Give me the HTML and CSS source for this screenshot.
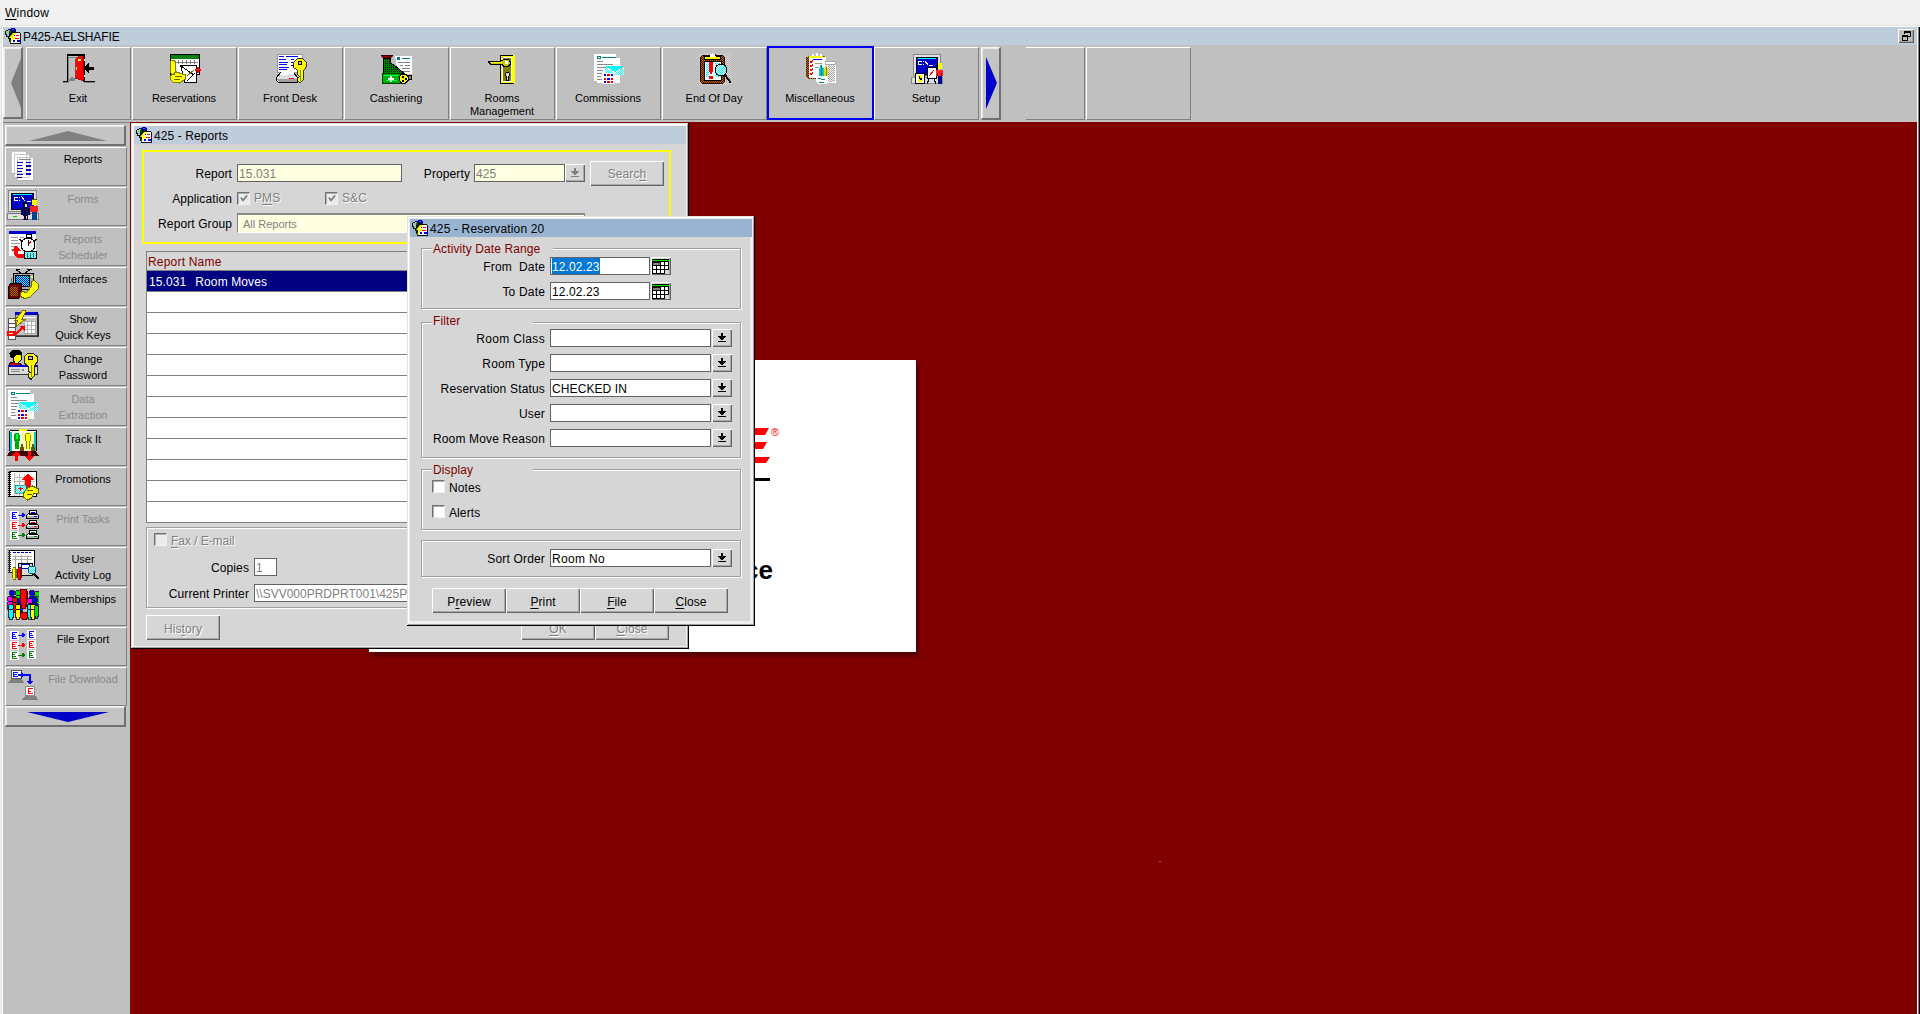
FILE: index.html
```html
<!DOCTYPE html>
<html lang="en">
<head>
<meta charset="utf-8">
<title>P425-AELSHAFIE</title>
<link rel="stylesheet" href="styles.css">
</head>
<body>
<svg class="defs" aria-hidden="true">
  <defs>
    <pattern id="brown" width="2" height="2" patternUnits="userSpaceOnUse"><path fill="#800000" d="M0 0h2v2H0z"/><path fill="#808000" d="M0 0h1v1H0zM1 1h1v1H1z"/></pattern>
    <pattern id="cyan" width="2" height="2" patternUnits="userSpaceOnUse"><path fill="#fff" d="M0 0h2v2H0z"/><path fill="#0ff" d="M0 0h1v1H0zM1 1h1v1H1z"/></pattern>
    <pattern id="blue" width="2" height="2" patternUnits="userSpaceOnUse"><path fill="#0ff" d="M0 0h2v2H0z"/><path fill="#00c" d="M0 0h1v1H0zM1 1h1v1H1z"/></pattern>
    <pattern id="green" width="2" height="2" patternUnits="userSpaceOnUse"><path fill="#008000" d="M0 0h2v2H0z"/><path fill="#000" d="M0 0h1v1H0z"/></pattern>
    <pattern id="gray" width="2" height="2" patternUnits="userSpaceOnUse"><path fill="#fff" d="M0 0h2v2H0z"/><path fill="#a0a0a0" d="M0 0h1v1H0zM1 1h1v1H1z"/></pattern>
    <symbol id="app" viewBox="0 0 16 16"><path fill="#111" d="M1 2h2V1h2v1h6v2h4v1h1v11H5v-2H4v-3H3V9H1V7H0V3h1z"/><path fill="#98c8b0" d="M1 3h2V2h2v2H4v4H2V6H1z"/><path fill="#006000" d="M4 3h2v2H4z"/><path fill="#00a" d="M5 1h1V0h4v1h1v3h-1V3H5z"/><path fill="#36f" d="M7 1h2v1H7z"/><path fill="#fff" d="M8 5h7v10H6V9h2z"/><path fill="#ff0" d="M8 5L4 10h3l-2 5 6-6H8l3-4z"/><path fill="red" d="M11 7h3v1h-3zM10 10h4v1h-4z"/><path fill="#00f" d="M9 7h1v1H9zM8 12h2v2H8zM12 12h3v2h-3z"/></symbol>
    <symbol id="down" viewBox="0 0 8 10"><path fill="currentColor" d="M3 0h2v3h3v1H7v1H6v1H5v1H3V6H2V5H1V4H0V3h3zM0 8h8v1H0z"/></symbol>
    <symbol id="cal" viewBox="0 0 17 15"><path fill="#000" d="M0 0h17v15H0z"/><path fill="#0e0" d="M0 1h17v1H0z"/><path fill="#808080" d="M1 4h7v2H1z"/><path fill="#fff" d="M9 3h3v3H9zM13 3h3v3h-3zM1 7h3v3H1zM5 7h3v3H5zM9 7h3v3H9zM13 7h3v3h-3zM1 11h3v3H1zM5 11h3v3H5zM9 11h3v3H9z"/><path fill="#d6d6d6" d="M13 11h4v4h-4z"/></symbol>
    <symbol id="doc" viewBox="0 0 32 32"><path fill="#fff" d="M1 1h22v4h4v25H4v-2H1z"/><path fill="#888" d="M4 8h6v1H4zM4 11h16v1H4zM4 14h8v1H4zM4 17h6v1H4zM4 20h5v1H4zM4 23h4v1H4zM4 26h5v1H4z"/><path fill="none" stroke="teal" d="M4.500 3.500h3v2h-3z"/><path fill="teal" d="M9 4h14v1H9z"/><path fill="#0ff" d="M12 13h19L22 19z"/><path fill="url(#cyan)" d="M12 14l10 6 9-5v7H12z"/><path fill="#fff" d="M10 20h11v11H10z"/><path fill="#00f" d="M11 21h2v2h-2zM18 21h2v2h-2zM14 25h3v2h-3zM11 28h2v2h-2z"/><path fill="red" d="M14 21h3v2h-3zM11 25h2v2h-2zM18 25h2v2h-2zM14 28h3v2h-3zM18 28h2v2h-2z"/></symbol>
    <symbol id="key" viewBox="0 0 15 27"><path fill="#ff0" stroke="#222" d="M4.500.5h6l3.500 3v6l-3 3.500v10l-3 3.500-3-3v-3l2-1-2-2v-4.500l-4-3v-6z"/><path fill="#c0c0c0" stroke="#000" d="M5.500 3.500h4v3h-4z"/><path stroke="#808000" d="M8.500 12v12"/></symbol>
    <symbol id="sheet" viewBox="0 0 10 9"><path fill="#fff" d="M0 0h10v9H0z"/><path fill="currentColor" d="M2 1h6v1H2zM2 3h4v1H2zM2 5h5v1H2zM2 1h1v6H2zM2 7h6v1H2z"/></symbol>
    <symbol id="arrow" viewBox="0 0 9 7"><path fill="currentColor" d="M0 3h5V0l4 3.500L5 7V5H0z"/></symbol>
    <symbol id="printer" viewBox="0 0 13 10"><path fill="#fff" stroke="#000" d="M3.500.5h7v4h-7zM.5 5.500l2-2h8l2 2v3h-12z"/><path fill="#b0b0b0" d="M1 6h11v2H1z"/><path fill="currentColor" d="M5 2h4v1H5zM8 6h3v1H8z"/></symbol>
    <symbol id="person" viewBox="0 0 6 16"><path fill="#000" d="M1 0h4v1h1v4H5v1h1v8H5v2H1v-2H0V6h1V5H0V1h1z" opacity=".75"/><path fill="currentColor" d="M1 1h4v4H1zM1 6h4v7H4v2H2v-2H1z"/></symbol>
  </defs>
</svg>

<nav class="menubar"><span><u>W</u>indow</span></nav>

<div class="frame">
  <header class="titlebar main-title">
    <svg class="app-icon"><use href="#app"/></svg><span>P425-AELSHAFIE</span>
    <button class="restore" aria-label="Restore"><svg width="9" height="10" viewBox="0 0 9 10"><path fill="#000" d="M2 0h7v6H6V5h2V2H3v1H2zM0 4h6v6H0z"/><path fill="#c0c0c0" d="M1 6h4v3H1z"/></svg></button>
  </header>

  <div class="toolbar">
    <button class="scroll side-left" aria-label="Scroll left"><svg width="10" height="50" viewBox="0 0 10 50"><path fill="#808080" d="M10 0v50L0 25z"/></svg></button>
    <button class="tool"><svg class="ic" viewBox="0 0 32 32"><path fill="#808080" d="M6 4h14v1H6zM5 4h1v25H5zM0 29h6v1H0zM21 29h11v1H21z"/><path fill="#000" d="M0 28h4V1h18v27h10v1H20V3H5v26H0z"/><path fill="#808080" d="M8 24l4 1v3H5z"/><path fill="red" stroke="#800000" stroke-width=".7" d="M12.500 5.500l2-2h6V28l-8-2.500z"/><path fill="#ff0" d="M15 6h3v2h-3zM13 14h1v3h-1z"/><path fill="#fff" d="M21 6h1v2h-1zM21 22h1v2h-1z"/><path d="M20 15l6-5v4h5v3h-5v3z"/></svg><span>Exit</span></button>
    <button class="tool"><svg class="ic" viewBox="0 0 32 32"><path fill="#fff" stroke="#000" d="M1.500 1.500h29v20h-29z"/><path fill="#008000" d="M2 2h28v4H2z"/><path fill="#808080" d="M5 7h1v2H5zM9 7h1v4H9zM13 7h1v4h-1zM17 7h1v4h-1zM21 7h1v4h-1zM25 7h1v4h-1zM6 9h23v1H6z"/><path fill="#fff" stroke="#000" d="M11.500 12h16v17h-12z"/><path stroke="#000" fill="none" d="M12 13l13 9M18 28l8-8"/><path fill="red" d="M28 14h2v2h2v2h-2v2h-2v-2h-2v-2h2z"/><path fill="#ff0" stroke="#808000" d="M2.500 7.500h3l1 2v8l-1 4h-3l-1-3V9zM1.500 23l6-4 9 3v4l-6 4-7-1-2-3z"/><path fill="none" stroke="#666600" d="M6 23h7M5 26h6M18 23l7-6"/></svg><span>Reservations</span></button>
    <button class="tool"><svg class="ic" viewBox="0 0 32 32"><path fill="#fff" stroke="#999" d="M2.500 1.500h25v18h-25z"/><path fill="#00f" d="M4 3h5v1H4zM11 3h12v1H11zM4 6h7v1H4zM4 9h9v1H4zM4 11h8v1H4zM4 14h10v1H4zM4 16h8v1H4zM16 6h3v1h-3zM16 9h3v1h-3zM16 12h4v1h-4z"/><path fill="#e0e0e0" stroke="#000" d="M1.500 24.500l4-5h13l4 5v5h-19l-2-2z"/><path fill="#a0a0a0" d="M2 26h20v3H4z"/><path fill="#fff" d="M6 18h13v4H6z"/><path fill="red" d="M14 25h5v1h-5z"/><use href="#key" x="18" y="5" width="14" height="26"/></svg><span>Front Desk</span></button>
    <button class="tool"><svg class="ic" viewBox="0 0 32 32"><path fill="#fff" d="M14 3h17v18H17z"/><path fill="teal" d="M16 4h3v3h-3zM21 5h8v1h-8z"/><path fill="#808080" d="M17 9h12v1H17zM19 12h3v1h-3zM24 12h5v1h-5zM21 15h8v1h-8zM22 18h7v1h-7z"/><path fill="#800000" stroke="#000" stroke-width=".5" d="M0 2h12l-2 3H2z"/><path fill="url(#green)" stroke="#000" d="M2.500 5h7v5l6 4 7 6H2.500z"/><path fill="#00b000" stroke="#004000" d="M1.500 20.500h18v10h-18z"/><path fill="#00ff40" d="M3 22h14v1H3zM5 27h11v1H5z"/><path fill="#fff" d="M9 23h2v2h2v2h-2v2H9v-2H7v-2h2z"/><path fill="#808080" stroke="#000" d="M25 22.500h5v4h-5z"/><path fill="#ff0" stroke="#000" d="M20.500 21h4l3 3v3l-3 3h-4l-2-3v-3z"/><path d="M21 23h2v2h-2zM24 25h2v2h-2zM21 27h2v2h-2z"/></svg><span>Cashiering</span></button>
    <button class="tool"><svg class="ic" viewBox="0 0 32 32"><path fill="#ff0" d="M13 2h15v29H13z"/><path fill="#000" d="M13 2h13v1H14v27h13v1H13z"/><path fill="#808000" d="M15 4h10v25H15z"/><path fill="none" stroke="#fff" d="M15.500 5v23.500h9V4.500h-9"/><path fill="#c8c800" stroke="#000" d="M1.500 8.500h12l3-2h5l1.500 2v3l-2 2h-4l-2-2h-11l-2-2z"/><path stroke="#ff0" d="M3 9.500h12"/><path fill="#fff" d="M18 8h3v3h-3z"/><path fill="#ddd" stroke="#000" d="M19.500 19.500h2l1 1v2l-1 1v4h-2v-4l-1-1v-2z"/></svg><span>Rooms<br>Management</span></button>
    <button class="tool"><svg class="ic"><use href="#doc"/></svg><span>Commissions</span></button>
    <button class="tool"><svg class="ic" viewBox="0 0 32 32"><path fill="url(#gray)" d="M0 0h32v32H0z" opacity=".4"/><path fill="url(#brown)" stroke="#300" d="M1.500 4.500l2-2h20l2 2v24l-2 2h-20l-2-2z"/><path fill="#fff" stroke="#000" d="M5.500 8.500h17v19h-17z"/><path fill="url(#cyan)" d="M7 10h3v14H7zM16 10h6v14h-6z"/><path fill="#ff0" stroke="#000" d="M5.500 3.500h5l1-2h5l1 2h4v3h-16z"/><path fill="#fff" d="M11 1h5v3h-5z"/><path fill="red" d="M10 9h4v8l-1 4h-2l-1-4zM10 23h4v3h-4z"/><circle cx="22" cy="17" r="6" fill="url(#cyan)" stroke="#000"/><path stroke="#000" stroke-width="2" d="M26 22l6 8"/></svg><span>End Of Day</span></button>
    <button class="tool selected"><svg class="ic" viewBox="0 0 32 32"><path fill="url(#brown)" d="M1 4l3-1h16v23H3l-2-3z"/><path fill="#fff" d="M4 4h17v21H4z"/><path fill="#ff0" d="M4 3h14v2H4z"/><path fill="#fff" d="M7 1h2v2H7zM11 0h2v3h-2zM15 1h2v2h-2z"/><path fill="#00f" d="M8 6h9v1H8z"/><path fill="none" stroke="red" d="M5 8l1 2 2-3M5 12l1 2 2-3M5 16l1 2 2-3M5 20l1 2 2-3"/><path fill="#999" d="M10 10h7v1h-7zM10 14h4v1h-4z"/><path fill="url(#gray)" stroke="#fff" d="M22.500 10h8v19h-8z"/><path fill="#fff" stroke="#aaa" d="M20.500 8.500h10v3h-10z"/><path fill="#0cc" d="M14 16l2-5 3 5v10h-5z"/><path fill="#dd0" d="M19 17l2-5 2 4v11h-4z"/><path fill="#007878" d="M16 12h1v12h-1z"/><path fill="#888800" d="M21 14h1v12h-1z"/><path fill="#fff" d="M11 23h12v6l-1 2h-9l-2-2z"/><path fill="none" stroke="teal" d="M13 26l2-1 2 2 3-1M14 29h5"/></svg><span>Miscellaneous</span></button>
    <button class="tool"><svg class="ic" viewBox="0 0 32 32"><path fill="#e0e0e0" stroke="#888" d="M2.500 1.500h27v21h-27z"/><path fill="#00c" stroke="#000" d="M5.500 4.500h21v17h-21z"/><path fill="#0ff" d="M7 5h18v1H7z"/><path stroke="#fff" fill="none" d="M10.500 8.500h-3v3h3M12.500 8v1M12.500 11v1M14 8l3 4M18 12.500h4"/><path fill="#ddd" stroke="#888" d="M.5 24.500h31v6H.5z"/><path fill="#fff" stroke="#000" d="M4.500 20.500h9v10h-9zM16.500 14.500h9v11h-9z"/><path fill="#ff0" d="M7 22h4v7H7z"/><path d="M8 23h1v2h2v2H9v-1H8z"/><path stroke="red" d="M18 23l5-6"/><path stroke="#000" d="M18 26l-2 5M23 26l2 5"/><path fill="#ff0" d="M27 10h4v6h-4z"/><path fill="#f22" d="M25 17h7v6h-7z"/><path fill="#800000" d="M26 20h1v3h-1zM30 20h1v3h-1z"/><path fill="#008" d="M27 23h4v8h-4z"/></svg><span>Setup</span></button>
    <button class="scroll side-right" aria-label="Scroll right"><svg width="11" height="52" viewBox="0 0 11 52"><path fill="#0000c8" d="M0 0v52l11-26z"/></svg></button>
    <span class="tool blank partial"></span><span class="tool blank"></span>
  </div>

  <div class="workspace">
    <aside class="sidebar">
      <button class="scroll flat" aria-label="Scroll up"><svg width="78" height="10" viewBox="0 0 78 10"><path fill="#808080" d="M0 10h78L39 0z"/></svg></button>
      <button class="item"><svg class="ic" viewBox="0 0 32 32"><path fill="#fff" stroke="#b0b0b0" stroke-width=".7" d="M4 2h15v22H4zM7 5h15v23H7zM10 8h16v23H10z"/><path fill="#888" d="M12 10h12v1H12z"/><path fill="#0000c8" d="M10 13h6v1h-6zM10 16h5v1h-5zM10 19h6v1h-6zM10 22h5v1h-5zM10 25h6v1h-6zM10 28h5v1h-5zM19 13h5v1h-5zM19 16h5v2h-5zM19 20h5v2h-5zM19 24h5v2h-5z"/></svg><span>Reports</span></button>
      <button class="item off"><svg class="ic" viewBox="0 0 32 32"><path fill="url(#gray)" d="M0 0h32v32H0z" opacity=".4"/><path fill="#e0e0e0" stroke="#888" d="M1.500 1.500h28v21h-28z"/><path fill="#00c" stroke="#000" d="M4.500 4.500h22v16h-22z"/><path fill="#0ff" d="M6 5h19v1H6z"/><path stroke="#fff" fill="none" d="M10.500 8.500h-3v3h3M12.500 8v1M12.500 11v1M14 7l4 5M20 12.500h4"/><path fill="#e0e0e0" stroke="#777" d="M.5 24.500h31v6H.5z"/><path fill="#0c0" d="M6 27h4v1H6z"/><path fill="#ff0" d="M25 10h5v6h-5z"/><path fill="#550" d="M25 10h5v1h-5z"/><path fill="#f22" d="M23 17h8v6h-8z"/><path fill="#048" d="M25 23h5v8h-5z"/><path fill="#000050" d="M16 13h5v6h2v7h-2v5h-5v-5h-2v-7h2z"/><path fill="#fc8" d="M18 15h2v3h-2zM16 27h1v3h-1zM19 27h1v3h-1z"/></svg><span>Forms</span></button>
      <button class="item off"><svg class="ic" viewBox="0 0 32 32"><path fill="#fff" d="M2 2h27v25H2z"/><path fill="#00c" d="M2 2h27v3H2z"/><path fill="#999" d="M4 8h7v1H4zM13 8h4v1h-4zM19 8h7v1h-7zM4 11h7v1H4zM13 11h4v1h-4zM4 14h9v1H4zM4 17h7v1H4zM4 20h5v1H4z"/><circle cx="21" cy="16" r="7" fill="#fff" stroke="#000"/><path fill="#fff" stroke="#000" d="M19 8.500h5v-3h-5zM12 10l3 2M27 12l3-2"/><path stroke="red" fill="none" d="M21 17l3-5"/><path stroke="#000" fill="none" d="M21.500 11v6"/><path fill="red" d="M5 22l4-6 5 6h-3v3h7v4H10l-3-3v-4z"/><path fill="url(#cyan)" stroke="#000" d="M17.500 22.500h12v7h-12z"/><path fill="teal" d="M20 24h1v5h-1zM23 24h1v5h-1zM26 24h1v5h-1z"/></svg><span>Reports<br>Scheduler</span></button>
      <button class="item"><svg class="ic" viewBox="0 0 32 32"><path stroke="#000" fill="none" d="M9 1l7 4 7-4M9 .5h4M20 .5h5"/><path fill="#aaa" stroke="#000" d="M6.500 4.500h20v16h-20z"/><path fill="url(#blue)" stroke="#000" d="M8.500 6.500h14v11h-14z"/><path fill="#ff0" d="M24 7h2v2h-2z"/><path fill="#40e0d0" stroke="#066" stroke-width=".5" d="M4 9l2 6H4z"/><path fill="#700000" stroke="#000" d="M1.500 17.500l2-3h11v12l-3 3h-10z"/><path fill="url(#brown)" d="M3 18h8v9H3z"/><path fill="#ff0" stroke="#666600" d="M24.500 12.500l3-1 4 4v4l-9 9-5 1-4-2v-4l2-1 4 1 5-6z"/></svg><span>Interfaces</span></button>
      <button class="item"><svg class="ic" viewBox="0 0 32 32"><path fill="#c0c0c0" stroke="#555" d="M8.500 3.500h22v23h-22z"/><path fill="#333" d="M30 5h2v22l-1 1H9v-1h21z"/><path fill="#00c" d="M8 3h23v3H8z"/><path fill="#fff" d="M12 8h17v1H12z"/><path fill="#fff" stroke="#999" stroke-width=".7" d="M17 12h11v12H17zM20 12v12M24 12v12M17 16h11M17 20h11"/><path fill="#fff" stroke="#555" d="M1.500 9.500h7v21h-7zM1 14h8M1 18h8M1 26h8"/><path fill="#ff0" stroke="#886600" d="M16 1l3 1-4 8h4L8 18l3-7H8z"/><path fill="none" stroke="red" stroke-width="2" d="M1 23h6v3H1zM8 26l7-7"/><path fill="red" d="M12 17h6v6z"/></svg><span>Show<br>Quick Keys</span></button>
      <button class="item"><svg class="ic" viewBox="0 0 32 32"><path fill="#d00" stroke="#000" d="M2 18l1-4 6-2 6 4v3z"/><path fill="#ff0" stroke="#000" d="M6 3h8v8l-3 3H8l-2-4z"/><path d="M2 4l3-3h8l2 3-1 2H9L7 9H4z"/><path fill="#ddd" stroke="#333" d="M1.500 16.500h29v9h-29z"/><path fill="#00c" d="M2 16h28v2H2z"/><path fill="#888" d="M4 20h9v1H4zM4 22h9v1H4zM15 20h2v2h-2z"/><use href="#key" x="16" y="4" width="15" height="27"/></svg><span>Change<br>Password</span></button>
      <button class="item off"><svg class="ic"><use href="#doc"/></svg><span>Data<br>Extraction</span></button>
      <button class="item"><svg class="ic" viewBox="0 0 32 32"><path fill="#fff" d="M2 2h28v20H2z"/><path fill="#ffffa0" d="M15 3h12v18H15z"/><path stroke="#000" fill="none" d="M3 1.500h27M2.500 2v20M29.500 2v20"/><path fill="#0cc" d="M3 3h2v19H3zM27 3h2v19h-2z"/><path fill="#ff0" d="M12 0h8v2h-8z"/><path fill="#0a0" d="M8 4h4l1 3v4l-1 2v7H8v-7l-1-2V7z"/><path fill="#0f4" d="M9 5h2v5H9z"/><path fill="#880" d="M18 6l1-2h4l1 3v4l-1 2v7h-4v-7l-1-2z"/><path fill="#ff0" d="M19 5h4v7h-1v8h-2v-8h-1z"/><path fill="#665500" d="M14 15h2v3h1v4h-4v-4h1zM25 15h2v3h1v4h-4v-4h1z"/><path fill="#400" d="M3 22h26l3 5H0z"/><path fill="red" d="M9 22l5 5h-3v5H8v-5H5zM21 22h3v5h3l-4.500 5-4.500-5h3z"/></svg><span>Track It</span></button>
      <button class="item"><svg class="ic" viewBox="0 0 32 32"><path fill="#fff" stroke="#000" d="M2.500 2.500h27v25h-27z"/><path stroke="#000" stroke-width="3" stroke-dasharray="1 1" d="M2 3v25"/><path fill="#bbb" d="M7 5h1v22H7zM12 5h1v22h-1zM17 5h1v22h-1zM8 8h20v1H8zM8 12h20v1H8z"/><path fill="red" d="M21 4l6 7h-3v8h-6v-8h-3z"/><path fill="url(#cyan)" stroke="#066" stroke-width=".6" d="M8 16h11v8H8z"/><path fill="red" d="M13 18h1v4h-1zM11 19h5v1h-5z"/><path fill="#ff0" stroke="#666600" d="M16.500 24l4-5 5-2 6 3v4l-5 1-2 4-4 2-4-3z"/><path fill="none" stroke="#666600" d="M20 21h6M20 25h5"/></svg><span>Promotions</span></button>
      <button class="item off"><svg class="ic" viewBox="0 0 32 32"><g color="#00f"><use href="#sheet" x="3" y="2" width="9" height="9"/><use href="#arrow" x="10" y="3" width="9" height="6"/><use href="#printer" x="19" y="1" width="13" height="10"/></g><g color="red"><use href="#sheet" x="3" y="12" width="9" height="9"/><use href="#arrow" x="10" y="13" width="9" height="6"/><use href="#printer" x="19" y="11" width="13" height="10"/></g><g color="green"><use href="#sheet" x="3" y="22" width="9" height="9"/><use href="#arrow" x="10" y="23" width="9" height="6"/><use href="#printer" x="19" y="21" width="13" height="10"/></g></svg><span>Print Tasks</span></button>
      <button class="item"><svg class="ic" viewBox="0 0 32 32"><path fill="#fff" stroke="#000" d="M2.500 1.500h25v22h-25z"/><path stroke="#333" stroke-width="3" stroke-dasharray="1 1" d="M2 1v24"/><path stroke="#00c" stroke-width="1" stroke-dasharray="3 1" d="M6 3.500h18"/><path fill="#aaa" d="M6 7h19v1H6zM6 10h19v1H6zM8 6h1v15H8zM14 6h1v12h-1zM20 6h1v12h-1z"/><path fill="#ddd" stroke="#000" d="M11.500 14.500h14v12h-14z"/><path fill="#fff" stroke="#00c" d="M14.500 15.500h8v4h-8z"/><path fill="#770" d="M5 20h1v-2h3v2h1v9H9v2H6v-2H5z"/><path fill="#ff0" d="M6 19h2v11H6z"/><path fill="#700" d="M10 20h1v-2h3v2h1v9h-1v2h-3v-2h-1z"/><path fill="red" d="M11 19h2v11h-2z"/><circle cx="25" cy="21" r="4" fill="url(#cyan)" stroke="#068"/><path stroke="#000" stroke-width="2" d="M27 25l5 5"/></svg><span>User<br>Activity Log</span></button>
      <button class="item"><svg class="ic" viewBox="0 0 32 32"><g color="#00f"><use href="#person" x="2" y="1" width="6" height="16"/><use href="#person" x="22" y="1" width="6" height="16"/></g><g color="#0d0"><use href="#person" x="8" y="1" width="6" height="16"/><use href="#person" x="27" y="2" width="6" height="16"/></g><g color="#f0f"><use href="#person" x="0" y="7" width="6" height="16"/><use href="#person" x="20" y="9" width="6" height="16"/></g><g color="red"><use href="#person" x="5" y="8" width="6" height="16"/></g><g color="#00f"><use href="#person" x="10" y="9" width="6" height="16"/><use href="#person" x="25" y="8" width="6" height="16"/></g><g color="#0ff"><use href="#person" x="1" y="15" width="6" height="16"/><use href="#person" x="20" y="15" width="6" height="16"/></g><g color="#ff0"><use href="#person" x="8" y="15" width="6" height="16"/><use href="#person" x="23" y="15" width="6" height="16"/></g><g color="#0d0"><use href="#person" x="27" y="15" width="5" height="16"/></g><path fill="#600" d="M13 0h7v2h1v9l-2 9h-4l-2-9V2h0zM14 23h5l2 2v4l-2 2h-4l-2-2v-4z"/><path fill="red" d="M14 1h5v9l-1 9h-3l-1-9zM15 24h3l2 2v2l-2 2h-3l-1-2v-2z"/></svg><span>Memberships</span></button>
      <button class="item"><svg class="ic" viewBox="0 0 32 32"><g color="#00f"><use href="#sheet" x="3" y="2" width="9" height="9"/><use href="#arrow" x="10" y="3" width="9" height="6"/><use href="#sheet" x="20" y="1" width="9" height="9"/></g><g color="red"><use href="#sheet" x="3" y="12" width="9" height="9"/><use href="#arrow" x="10" y="13" width="9" height="6"/><use href="#sheet" x="20" y="11" width="9" height="9"/></g><g color="green"><use href="#sheet" x="3" y="22" width="9" height="9"/><use href="#arrow" x="10" y="23" width="9" height="6"/><use href="#sheet" x="20" y="21" width="9" height="9"/></g></svg><span>File Export</span></button>
      <button class="item off"><svg class="ic" viewBox="0 0 32 32"><path fill="#808080" d="M4 10h11l2 4H1zM18 27h11l2 4H15z"/><path fill="#fff" stroke="#555" d="M4.500 1.500h10v8h-10z"/><path fill="none" stroke="#00f" d="M11 3.500H6.500v4H11M6 5.500h4"/><path fill="#fff" stroke="#888" d="M18.500 17.500h9v9h-9z"/><path fill="none" stroke="red" d="M26 19.500h-4.500v5H26M21 22h3"/><path fill="none" stroke="#00f" stroke-width="2" d="M11 6h12v7"/><path fill="#00f" d="M14 3l4 3-4 3zM20 12h6l-3 4z"/></svg><span>File Download</span></button>
      <button class="scroll flat last" aria-label="Scroll down"><svg width="82" height="10" viewBox="0 0 82 10"><path fill="#0000c8" d="M0 0h82L41 10z"/></svg></button>
    </aside>

    <main class="desktop">
      <section class="splash">
        <svg width="103" height="150" viewBox="0 0 103 150"><path fill="red" d="M0 0h102l-4 7H0zM0 14h100l-4 7H0zM0 29h103l-4 6H0z"/><path d="M0 50h103v3H0z"/></svg>
        <span class="reg">®</span>
        <span class="tagline">ce</span>
      </section>
      <i class="speck"></i>

      <section class="window reports">
        <header class="titlebar"><svg class="app-icon"><use href="#app"/></svg><span>425 - Reports</span></header>
        <div class="criteria">
          <div class="row"><label>Report</label><span class="field dim cream report-no">15.031</span><label class="property">Property</label><span class="field dim cream prop-no">425</span><button class="drop dim joined" aria-label="List"><svg><use href="#down"/></svg></button><button class="btn dim search">Searc<u>h</u></button></div>
          <div class="row"><label>Application</label><span class="check dim"><svg viewBox="0 0 10 10"><path d="M1.500 4l2.500 3L8.500 1.500" fill="none" stroke="#808080" stroke-width="2"/></svg></span><span class="check-text dim pms">P<u>M</u>S</span><span class="check dim"><svg viewBox="0 0 10 10"><path d="M1.500 4l2.500 3L8.500 1.500" fill="none" stroke="#808080" stroke-width="2"/></svg></span><span class="check-text dim">S&amp;C</span></div>
          <div class="row"><label>Report Group</label><span class="field cream sunken">All Reports</span></div>
        </div>
        <div class="list">
          <div class="list-head">Report Name</div>
          <div class="list-row current"><span>15.031</span><span>Room Moves</span></div>
          <div class="list-row"></div><div class="list-row"></div><div class="list-row"></div><div class="list-row"></div><div class="list-row"></div><div class="list-row"></div><div class="list-row"></div><div class="list-row"></div><div class="list-row"></div><div class="list-row"></div><div class="list-row"></div>
        </div>
        <div class="group output">
          <div class="fax"><span class="check dim"></span><span class="check-text dim"><u>F</u>ax / E-mail</span></div>
          <div class="row"><label>Copies</label><span class="field dim copies">1</span></div>
          <div class="row"><label>Current Printer</label><span class="field dim printer">\\SVV000PRDPRT001\425P</span></div>
        </div>
        <div class="actions"><button class="btn dim">His<u>t</u>ory</button><button class="btn dim push"><u>O</u>K</button><button class="btn dim"><u>C</u>lose</button></div>
      </section>

      <section class="window dialog">
        <header class="titlebar active"><svg class="app-icon"><use href="#app"/></svg><span>425 - Reservation 20</span></header>
        <div class="dialog-body">
          <div class="group dates"><span class="legend wide">Activity Date Range</span>
            <div class="row"><label>From&nbsp; Date</label><span class="field date"><mark>12.02.23</mark></span><button class="calendar" aria-label="Calendar"><svg><use href="#cal"/></svg></button></div>
            <div class="row"><label>To Date</label><span class="field date">12.02.23</span><button class="calendar" aria-label="Calendar"><svg><use href="#cal"/></svg></button></div>
          </div>
          <div class="group filter"><span class="legend">Filter</span>
            <div class="row"><label class="loose">Room Class</label><span class="field combo"></span><button class="drop" aria-label="List"><svg><use href="#down"/></svg></button></div>
            <div class="row"><label>Room Type</label><span class="field combo"></span><button class="drop" aria-label="List"><svg><use href="#down"/></svg></button></div>
            <div class="row"><label>Reservation Status</label><span class="field combo">CHECKED IN</span><button class="drop" aria-label="List"><svg><use href="#down"/></svg></button></div>
            <div class="row"><label>User</label><span class="field combo"></span><button class="drop" aria-label="List"><svg><use href="#down"/></svg></button></div>
            <div class="row"><label>Room Move Reason</label><span class="field combo"></span><button class="drop" aria-label="List"><svg><use href="#down"/></svg></button></div>
          </div>
          <div class="group display"><span class="legend">Display</span>
            <div class="option"><span class="check"></span><span>Notes</span></div>
            <div class="option"><span class="check"></span><span>Alerts</span></div>
          </div>
          <div class="group sort">
            <div class="row"><label>Sort Order</label><span class="field combo wide-text">Room No</span><button class="drop" aria-label="List"><svg><use href="#down"/></svg></button></div>
          </div>
          <div class="actions"><button class="btn">P<u>r</u>eview</button><button class="btn"><u>P</u>rint</button><button class="btn"><u>F</u>ile</button><button class="btn"><u>C</u>lose</button></div>
        </div>
      </section>
    </main>
  </div>
</div>
</body>
</html>
```

FILE: styles.css
```css
* { box-sizing: border-box; }
body {
  margin: 0;
  width: 1920px;
  height: 1014px;
  overflow: hidden;
  display: flex;
  flex-direction: column;
  background: #f0f0f0;
  color: #000;
  font: 12px/18px "Liberation Sans", Arial, sans-serif;
  letter-spacing: .1px;
}
button { font: inherit; letter-spacing: inherit; color: inherit; padding: 0; margin: 0; border: 0; background: none; display: block; }
svg { display: block; flex: none; }
u { text-decoration: underline; text-underline-offset: 2px; }
.defs { position: absolute; width: 0; height: 0; }

.menubar { height: 25px; flex: none; padding: 4px 5px; letter-spacing: .25px; }

.frame {
  flex: 1;
  display: flex;
  flex-direction: column;
  margin-left: 1px;
  padding: 2px 3px 0 2px;
  background: #c0c0c0;
  box-shadow: inset 1px 1px #e3e3e3, inset 2px 2px #fff, inset -1px 0 #000, inset -2px 0 #808080, inset -3px 0 #fff;
}
.titlebar { height: 18px; flex: none; display: flex; align-items: center; background: #bfcddb; padding-left: 2px; }
.titlebar.active { background: #99b4d1; }
.titlebar span { padding: 1px 0 0 2px; }
.dialog .titlebar span { letter-spacing: .15px; }
.main-title span { letter-spacing: -.1px; }
.app-icon { width: 16px; height: 16px; }
.restore { width: 16px; height: 14px; margin: 0 3px 0 auto; display: grid; place-items: center; background: #c0c0c0; box-shadow: inset 1px 1px #fff, inset -1px -1px #606060, inset -2px -2px #a0a0a0; }

.toolbar { height: 77px; flex: none; display: flex; align-items: flex-start; padding-top: 2px; border-bottom: 1px solid #c0c0c0; }
.scroll { flex: none; display: flex; align-items: center; justify-content: center; background: #c4c4c4; border: 1px solid #f4f4f4; border-right: 2px solid #707070; border-bottom: 2px solid #707070; box-shadow: inset 1px 1px #e8e8e8; }
.side-left { width: 20px; height: 72px; margin-right: 3px; padding-left: 6px; }
.side-right { width: 20px; height: 73px; margin: 0 25px 0 1px; padding-left: 2px; }
.tool {
  width: 105px; height: 73px; margin-right: 1px; flex: none;
  display: flex; flex-direction: column; align-items: center;
  padding-top: 5px;
  border: 1px solid #fff; border-right-color: #808080; border-bottom-color: #808080;
  font-size: 11px; line-height: 13px; text-align: center;
  letter-spacing: 0;
}
.tool span { margin: 7px 1px 0 0; }
.ic { width: 32px; height: 32px; shape-rendering: crispEdges; }
.tool.selected { width: 107px; height: 74px; margin: -1px 0 0 -1px; padding-top: 5px; border: 2px solid #0000f8; }
.tool.partial { width: 59px; border-left: 0; margin-right: 1px; }

.workspace { flex: 1; min-height: 0; display: flex; }
.sidebar { width: 127px; flex: none; padding: 2px 2px 0; display: flex; flex-direction: column; gap: 1px; border-top: 1px solid #808080; }
.flat { width: 121px; height: 21px; padding: 1px 0 0 5px; }
.last { margin-top: -1px; }
.item {
  width: 122px; height: 39px; flex: none; display: flex; padding: 1px 0 0 1px;
  border: 1px solid #fff; border-right-color: #808080; border-bottom-color: #808080;
  font-size: 11px; line-height: 16px; letter-spacing: 0;
}
.item span { flex: 1; text-align: center; padding: 2px 0 0 1px; }
.item.off span { color: #8a8a8a; }

.desktop { flex: 1; position: relative; background: #800000; overflow: hidden; }
.splash { position: absolute; left: 239px; top: 238px; width: 547px; height: 292px; background: #fff; box-shadow: 3px 4px 3px #500000; }
.splash svg { position: absolute; left: 298px; top: 68px; }
.reg { position: absolute; left: 402px; top: 63px; font-size: 11px; color: red; letter-spacing: 0; }
.tagline { position: absolute; right: 143px; top: 195px; font: bold 26px/30px "Liberation Sans", Arial, sans-serif; letter-spacing: 0; }
.speck { position: absolute; left: 1029px; top: 739px; width: 2px; height: 1px; background: #a06060; }

.window { position: absolute; background: #d6d6d6; padding: 3px; box-shadow: inset -1px -1px #000, inset 1px 1px #e3e3e3, inset -2px -2px #a0a0a0, inset 2px 2px #fff, inset 3px 3px #f0f0f0, inset -3px -3px #f0f0f0; }
.reports { left: 1px; top: 1px; width: 558px; height: 526px; }
.dialog { left: 277px; top: 94px; width: 348px; height: 410px; }
.dialog { box-shadow: inset -1px -1px #000, inset 1px 1px #e3e3e3, inset -2px -2px #a0a0a0, inset 2px 2px #fff, inset 3px 3px #f0f0f0, inset -5px -5px #f0f0f0; }

.row { display: flex; align-items: center; height: 18px; }
.row label { text-align: right; white-space: nowrap; flex: none; padding-top: 1px; }
.field { display: block; height: 18px; line-height: 18px; background: #fff; border: 1px solid #646464; padding-left: 1px; overflow: hidden; white-space: nowrap; flex: none; }
.field.cream { background: #ffffe1; }
.dim { color: #808080; }
.btn.dim, .check-text.dim { text-shadow: 1px 1px #fff; }
.wide-text { letter-spacing: .35px; }
mark { display: inline-block; height: 16px; line-height: 18px; vertical-align: top; background: #0078d7; color: #fff; }
.drop, .calendar, .btn { flex: none; background: #d6d6d6; box-shadow: inset 1px 1px #fff, inset -1px -1px #646464, inset -2px -2px #a8a8a8; }
.drop { width: 20px; height: 18px; margin-left: 1px; display: grid; place-items: center; }
.drop svg { width: 8px; height: 10px; shape-rendering: crispEdges; }
.drop.joined { margin-left: 0; }
.calendar { width: 20px; height: 18px; margin-left: 1px; padding: 1px 0 0 1px; }
.calendar svg { width: 17px; height: 15px; shape-rendering: crispEdges; }
.btn { width: 74px; height: 25px; text-align: center; padding-top: 3px; }
.check { width: 13px; height: 13px; flex: none; padding: 1px; background: #fff; border: 1px solid; border-color: #707070 #f0f0f0 #f0f0f0 #707070; box-shadow: inset 1px 1px #b0b0b0; }
.check.dim { background: #ececec; }
.check svg { width: 10px; height: 9px; }

.criteria { width: 529px; height: 94px; margin: 6px 0 0 8px; padding-top: 12px; border: 2px solid #ff0; display: flex; flex-direction: column; gap: 7px; }
.criteria .row label { width: 88px; margin-right: 5px; }
.criteria .row .property { width: 68px; margin-right: 4px; }
.report-no { width: 165px; }
.prop-no { width: 91px; }
.search { margin-left: 5px; padding-top: 1px; }
.check-text { margin-left: 4px; }
.pms { width: 71px; }
.sunken { width: 348px; height: 20px; border: 1px solid #888; border-top-width: 2px; border-bottom-color: #fff; padding-left: 5px; font-size: 11px; letter-spacing: 0; color: #808080; }

.list { width: 528px; margin: 7px 0 0 12px; border-left: 1px solid #808080; border-top: 1px solid #808080; background: #fff; }
.list-head { height: 19px; background: #d6d6d6; color: #800000; padding-left: 1px; line-height: 20px; border-bottom: 1px solid #808080; letter-spacing: .2px; }
.list-row { height: 21px; border-bottom: 1px solid #808080; }
.current { background: #000080; color: #fff; display: flex; gap: 9px; padding-left: 2px; line-height: 23px; }

.group { position: relative; border: 1px solid #a0a0a0; box-shadow: 1px 1px #fff, inset 1px 1px #fff; display: flex; flex-direction: column; gap: 7px; }
.output { width: 528px; height: 81px; margin: 4px 0 0 12px; padding-top: 5px; gap: 0; }
.fax { display: flex; height: 13px; align-items: center; padding-left: 7px; margin-bottom: 12px; }
.fax .check-text { padding-top: 2px; letter-spacing: -.05px; }
.output .row { margin-bottom: 8px; }
.output .row label { width: 102px; margin-right: 5px; }
.copies { width: 23px; }
.printer { width: 260px; letter-spacing: 0; }
.actions { display: flex; }
.reports .actions { margin: 7px 0 0 12px; }
.push { margin-left: 301px; }

.dialog-body { padding: 11px 9px 0 11px; }
.dates { height: 61px; padding-top: 8px; }
.filter { height: 136px; margin-top: 13px; padding-top: 6px; }
.display { height: 61px; margin-top: 11px; padding: 10px 0 0 10px; gap: 12px; }
.sort { height: 37px; margin-top: 10px; padding-top: 8px; }
.dialog .group { width: 320px; }
.dialog .row label { width: 123px; margin-right: 5px; letter-spacing: .17px; }
.dialog .row .loose { letter-spacing: .35px; }
.dialog .actions { margin: 11px 0 0 11px; }
.legend { position: absolute; left: 10px; top: -9px; width: 101px; height: 18px; padding-left: 1px; color: #800000; background: linear-gradient(#d6d6d6, #d6d6d6) 0 7px / 100% 4px no-repeat; }
.filter .legend { top: -11px; background-position: 0 9px; }
.legend.wide { width: 121px; }
.date { width: 100px; }
.combo { width: 161px; }
.option { display: flex; align-items: center; height: 13px; gap: 4px; }
.option span:last-child { padding-top: 3px; }
```
